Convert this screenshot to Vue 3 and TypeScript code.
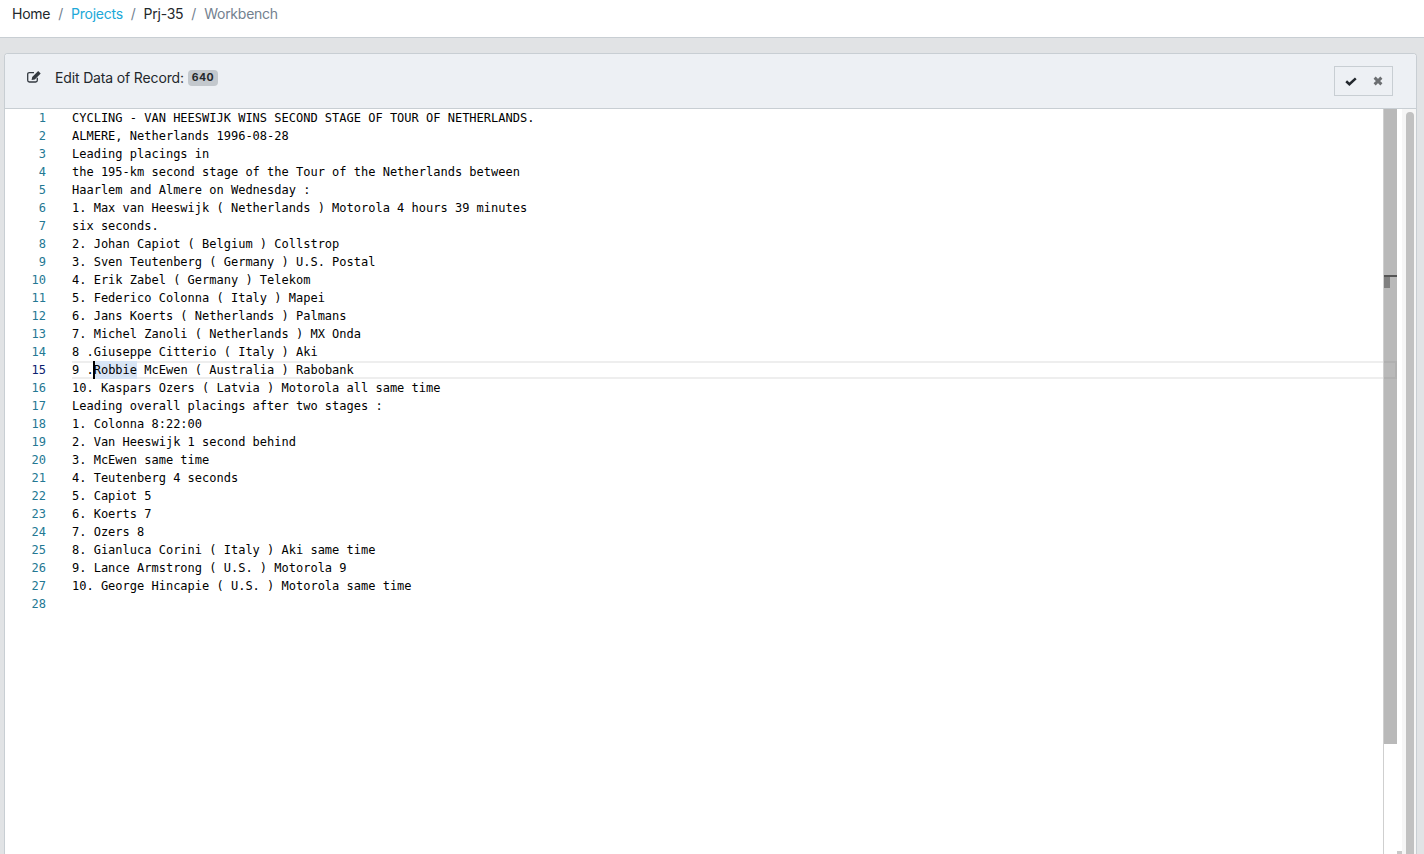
<script setup lang="ts">
const lines: string[] = [
  'CYCLING - VAN HEESWIJK WINS SECOND STAGE OF TOUR OF NETHERLANDS.',
  'ALMERE, Netherlands 1996-08-28',
  'Leading placings in',
  'the 195-km second stage of the Tour of the Netherlands between',
  'Haarlem and Almere on Wednesday :',
  '1. Max van Heeswijk ( Netherlands ) Motorola 4 hours 39 minutes',
  'six seconds.',
  '2. Johan Capiot ( Belgium ) Collstrop',
  '3. Sven Teutenberg ( Germany ) U.S. Postal',
  '4. Erik Zabel ( Germany ) Telekom',
  '5. Federico Colonna ( Italy ) Mapei',
  '6. Jans Koerts ( Netherlands ) Palmans',
  '7. Michel Zanoli ( Netherlands ) MX Onda',
  '8 .Giuseppe Citterio ( Italy ) Aki',
  '9 .Robbie McEwen ( Australia ) Rabobank',
  '10. Kaspars Ozers ( Latvia ) Motorola all same time',
  'Leading overall placings after two stages :',
  '1. Colonna 8:22:00',
  '2. Van Heeswijk 1 second behind',
  '3. McEwen same time',
  '4. Teutenberg 4 seconds',
  '5. Capiot 5',
  '6. Koerts 7',
  '7. Ozers 8',
  '8. Gianluca Corini ( Italy ) Aki same time',
  '9. Lance Armstrong ( U.S. ) Motorola 9',
  '10. George Hincapie ( U.S. ) Motorola same time',
  '',
]
const activeLine = 15
</script>

<template>
  <div class="page">
    <nav class="crumbs">
      <span class="crumb">Home</span>
      <span class="sep">/</span>
      <span class="crumb link">Projects</span>
      <span class="sep">/</span>
      <span class="crumb">Prj-35</span>
      <span class="sep">/</span>
      <span class="crumb muted">Workbench</span>
    </nav>
    <main class="body">
      <section class="card">
        <header class="head">
          <div class="title">
            <svg class="edit" width="14" height="13" viewBox="0 0 14 13" aria-hidden="true">
              <path d="M7 2.6H2.4C1.3 2.6.7 3.2.7 4.3v6c0 1.100.6 1.700 1.700 1.700h6.200c1.100 0 1.700-.6 1.700-1.700V7.800" fill="none" stroke="#343a40" stroke-width="1.300" />
              <path d="M11.200 1 13.700 3.500 7.800 9.400 4.600 10 5.200 6.900Z" fill="#343a40" />
            </svg>
            <span>Edit Data of Record:</span>
            <span class="badge">640</span>
          </div>
          <div class="actions">
            <svg width="12" height="9" viewBox="0 0 12 9" aria-hidden="true">
              <path d="M1.200 4.300 4.400 7.200 10.800 1.400" fill="none" stroke="#23282d" stroke-width="2.500" />
            </svg>
            <svg width="10" height="10" viewBox="0 0 10 10" aria-hidden="true">
              <path d="M1.600 1.600 8.400 8.400M8.400 1.600 1.600 8.400" fill="none" stroke="#6c6f72" stroke-width="2.900" />
            </svg>
          </div>
        </header>
        <div class="content">
          <div class="editor">
            <div class="gutter">
              <div v-for="(_, i) in lines" :key="i" class="num" :class="{ on: i + 1 === activeLine }">{{ i + 1 }}</div>
            </div>
            <div class="code">
              <div v-for="(line, i) in lines" :key="i" class="line" :class="{ current: i + 1 === activeLine }">
                <template v-if="i + 1 === activeLine">9 .<span class="caret"></span><span class="sel">Robbie</span> McEwen ( Australia ) Rabobank</template>
                <template v-else>{{ line }}</template>
              </div>
            </div>
            <div class="ruler">
              <div class="slider"></div>
              <div class="tick"></div>
              <div class="mark"></div>
            </div>
          </div>
          <div class="outer-bar">
            <div class="outer-thumb"></div>
            <div class="corner"></div>
          </div>
        </div>
      </section>
    </main>
  </div>
</template>

<style>
html, body { margin: 0; height: 100%; overflow: hidden; }
</style>

<style scoped>
.page {
  height: 854px;
  overflow: hidden;
  background: #e1e3e5;
  font-family: Inter, "Liberation Sans", sans-serif;
  color: #23282c;
}
.crumbs {
  background: #fff;
  border-bottom: 1px solid #c8ced3;
  display: flex;
  align-items: flex-start;
  padding: 5px 0 0 12px;
  box-sizing: border-box;
  height: 38px;
  font-size: 14px;
  line-height: 17px;
  letter-spacing: -.25px;
}
.sep { color: #73818f; margin: 0 8px; }
.link { color: #20a8d8; }
.muted { color: #73818f; }
.body { padding: 15px 7px 0 4px; }
.card {
  height: 801px;
  box-sizing: border-box;
  background: #fff;
  border: 1px solid #c8ced3;
  border-bottom: 0;
  border-radius: 4px 4px 0 0;
  display: flex;
  flex-direction: column;
}
.head {
  height: 55px;
  flex: none;
  box-sizing: border-box;
  background: #edf0f4;
  border-bottom: 1px solid #c8ced3;
  border-radius: 3px 3px 0 0;
  padding: 12px 23px 0 22px;
  display: flex;
  justify-content: space-between;
  align-items: flex-start;
}
.title {
  display: flex;
  align-items: center;
  height: 22px;
  font-size: 14px;
  letter-spacing: -.15px;
  color: #23282c;
}
.edit { margin-right: 14px; margin-top: -2px; }
.badge {
  margin: 2px 0 0 4px;
  background: #c3c8cd;
  color: #23282c;
  border-radius: 4px;
  font-size: 10.5px;
  font-weight: 700;
  line-height: 16px;
  padding: 0 4px;
  letter-spacing: .4px;
}
.actions {
  width: 59px;
  height: 30px;
  box-sizing: border-box;
  border: 1px solid #c8ced3;
  display: flex;
  align-items: center;
  gap: 16px;
  padding-left: 10px;
}
.content { flex: 1; display: flex; min-height: 0; }
.editor { flex: 1; display: flex; position: relative; min-width: 0; }
.gutter { width: 67px; flex: none; }
.num {
  height: 18px;
  padding-right: 26px;
  text-align: right;
  font: 12px/18px "DejaVu Sans Mono", monospace;
  color: #237893;
}
.num.on { color: #0b216f; }
.code {
  flex: 1;
  min-width: 0;
  font: 12px/18px "DejaVu Sans Mono", monospace;
  color: #000;
  white-space: pre;
}
.line { height: 18px; position: relative; }
.line.current::before {
  content: "";
  position: absolute;
  inset: 0 -14px 0 0;
  border: 2px solid #eeeeee;
  border-left-width: 0;
}
.sel {
  position: relative;
  background: #d8e5f5;
  display: inline-block;
  height: 18px;
  vertical-align: top;
}
.caret {
  position: absolute;
  left: 21px;
  top: 0;
  width: 2px;
  height: 18px;
  background: #000;
  z-index: 2;
}
.ruler {
  width: 14px;
  flex: none;
  position: relative;
  border-left: 1px solid #cfcfcf;
  box-sizing: border-box;
}
.slider {
  position: absolute;
  left: 0;
  top: 0;
  right: 0;
  height: 635px;
  background: rgba(100, 100, 100, .45);
}
.tick {
  position: absolute;
  left: 0;
  right: 0;
  top: 166px;
  height: 2px;
  background: #555;
}
.mark {
  position: absolute;
  left: 0;
  top: 168px;
  width: 6px;
  height: 11px;
  background: #808080;
}
.outer-bar {
  width: 19px;
  flex: none;
  position: relative;
  box-sizing: border-box;
  padding-left: 9px;
  padding-top: 3px;
  padding-right: 2px;
  background: linear-gradient(to right, #fff 5px, #f6f6f6 5px);
}
.outer-thumb {
  width: 8px;
  height: 100%;
  background: #c1c1c1;
  border-radius: 4px 4px 0 0;
}
.corner {
  position: absolute;
  left: 0;
  bottom: 0;
  width: 5px;
  height: 3px;
  background: #c8c8c8;
}
</style>
